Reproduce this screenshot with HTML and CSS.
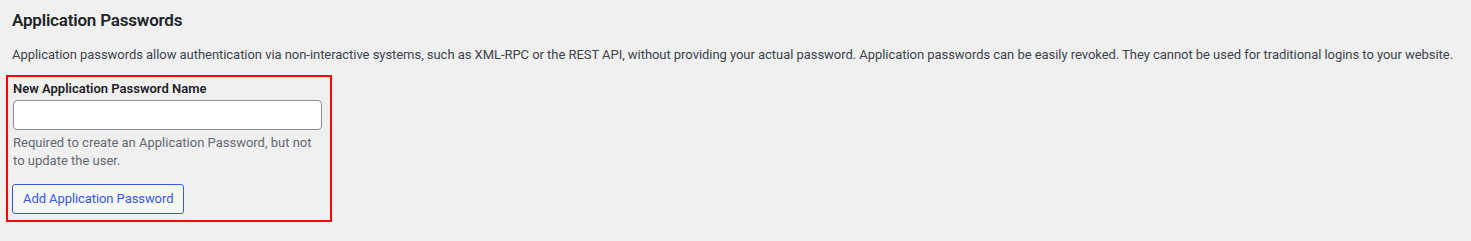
FILE: index.html
```html
<!DOCTYPE html>
<html lang="en">
<head>
<meta charset="utf-8">
<title>Application Passwords</title>
<link rel="stylesheet" href="styles.css">
</head>
<body>
<div class="section">
  <h2 class="title">Application Passwords</h2>
  <p class="intro">Application passwords allow authentication via non-interactive systems, such as XML-RPC or the REST API, without providing your actual password. Application passwords can be easily revoked. They cannot be used for traditional logins to your website.</p>
  <div class="create-box">
    <div class="form-field">
      <label class="field-label" for="app-pass-name">New Application Password Name</label>
      <input class="text-input" type="text" id="app-pass-name">
      <p class="description">Required to create an Application Password, but not to update the user.</p>
    </div>
    <button class="button" type="button">Add Application Password</button>
  </div>
</div>
</body>
</html>
```

FILE: styles.css
```css
html, body {
  margin: 0;
  padding: 0;
  background: #f0f0f1;
}
body {
  font-family: Roboto, "Liberation Sans", Arial, sans-serif;
  color: #3c434a;
  font-size: 13px;
  line-height: 1.4em;
}
.section {
  padding: 0 6px 0 12px;
}
.title {
  margin: 10px 0 0;
  font-size: 17px;
  line-height: 20px;
  font-weight: 600;
  letter-spacing: -0.2px;
  color: #1d2327;
}
.intro {
  margin: 16.4px 0 0;
  font-size: 13px;
  line-height: 18.2px;
  letter-spacing: -0.045px;
  color: #3c434a;
}
.create-box {
  margin: 10.4px 0 0 -6px;
  width: 317px;
  border: 2px solid #ff0000;
  padding: 2px 0 6px 5px;
  box-sizing: content-box;
}
.form-field {
  display: flex;
  flex-direction: column;
  align-items: flex-start;
}
.field-label {
  font-size: 13px;
  line-height: 20px;
  font-weight: 600;
  color: #1d2327;
  margin-bottom: 1px;
}
.text-input {
  width: 309px;
  height: 30px;
  box-sizing: border-box;
  margin: 0;
  border: 1px solid #8c8f94;
  border-radius: 4px;
  background: #fff;
  padding: 0 8px;
  font: inherit;
}
.description {
  width: 309px;
  margin: 3.7px 0 0;
  color: #646970;
  font-size: 13px;
  line-height: 18.2px;
}
.button {
  margin: 14px 0 0 -1px;
  height: 30px;
  padding: 0 10px;
  border: 1px solid #3858e9;
  border-radius: 3px;
  background: #f6f7f7;
  color: #3858e9;
  font-family: inherit;
  font-size: 13px;
  line-height: 28px;
  letter-spacing: -0.08px;
  cursor: pointer;
}
```
